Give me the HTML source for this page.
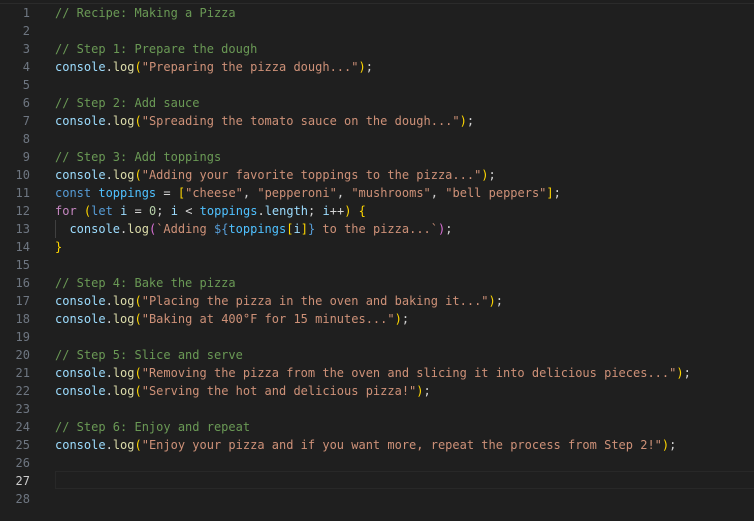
<!DOCTYPE html>
<html><head><meta charset="utf-8"><style>
html,body{margin:0;padding:0;background:#1f1f1f;width:754px;height:521px;overflow:hidden}
.top{position:absolute;left:0;top:0;width:754px;height:3px;border-bottom:1px solid #2b2b2b}
.ed{position:absolute;left:0;top:4px;font-family:"DejaVu Sans Mono","Liberation Mono",monospace;font-size:12px;line-height:18px}
.l{height:18px;position:relative;white-space:pre}
.n{display:inline-block;width:30px;text-align:right;color:#6e7681;margin-right:25px}
.a{color:#cccccc}
.cur{position:absolute;left:55px;top:-1px;width:699px;height:16px;border:1px solid #282828;border-right:none}
.c{color:#6a9955}.v{color:#9cdcfe}.f{color:#dcdcaa}.s{color:#ce9178}.k{color:#569cd6}.x{color:#c586c0}.num{color:#b5cea8}.cv{color:#4fc1ff}.p{color:#d4d4d4}
.g{color:#ffd700}.m{color:#da70d6}.b{color:#179fff}
.guide{position:absolute;left:55px;top:0;width:1px;height:18px;background:#404040}
</style></head><body>
<div class="top"></div>
<div class="ed">
<div class="l"><span class="n">1</span><span class="c">// Recipe: Making a Pizza</span></div>
<div class="l"><span class="n">2</span></div>
<div class="l"><span class="n">3</span><span class="c">// Step 1: Prepare the dough</span></div>
<div class="l"><span class="n">4</span><span class="v">console</span><span class="p">.</span><span class="f">log</span><span class="g">(</span><span class="s">"Preparing the pizza dough..."</span><span class="g">)</span><span class="p">;</span></div>
<div class="l"><span class="n">5</span></div>
<div class="l"><span class="n">6</span><span class="c">// Step 2: Add sauce</span></div>
<div class="l"><span class="n">7</span><span class="v">console</span><span class="p">.</span><span class="f">log</span><span class="g">(</span><span class="s">"Spreading the tomato sauce on the dough..."</span><span class="g">)</span><span class="p">;</span></div>
<div class="l"><span class="n">8</span></div>
<div class="l"><span class="n">9</span><span class="c">// Step 3: Add toppings</span></div>
<div class="l"><span class="n">10</span><span class="v">console</span><span class="p">.</span><span class="f">log</span><span class="g">(</span><span class="s">"Adding your favorite toppings to the pizza..."</span><span class="g">)</span><span class="p">;</span></div>
<div class="l"><span class="n">11</span><span class="k">const</span> <span class="cv">toppings</span> <span class="p">=</span> <span class="g">[</span><span class="s">"cheese"</span><span class="p">,</span> <span class="s">"pepperoni"</span><span class="p">,</span> <span class="s">"mushrooms"</span><span class="p">,</span> <span class="s">"bell peppers"</span><span class="g">]</span><span class="p">;</span></div>
<div class="l"><span class="n">12</span><span class="x">for</span> <span class="g">(</span><span class="k">let</span> <span class="v">i</span> <span class="p">=</span> <span class="num">0</span><span class="p">;</span> <span class="v">i</span> <span class="p">&lt;</span> <span class="cv">toppings</span><span class="p">.</span><span class="v">length</span><span class="p">;</span> <span class="v">i</span><span class="p">++</span><span class="g">)</span> <span class="g">{</span></div>
<div class="l"><span class="guide"></span><span class="n">13</span>  <span class="v">console</span><span class="p">.</span><span class="f">log</span><span class="m">(</span><span class="s">`Adding </span><span class="k">${</span><span class="cv">toppings</span><span class="g">[</span><span class="v">i</span><span class="g">]</span><span class="k">}</span><span class="s"> to the pizza...`</span><span class="m">)</span><span class="p">;</span></div>
<div class="l"><span class="n">14</span><span class="g">}</span></div>
<div class="l"><span class="n">15</span></div>
<div class="l"><span class="n">16</span><span class="c">// Step 4: Bake the pizza</span></div>
<div class="l"><span class="n">17</span><span class="v">console</span><span class="p">.</span><span class="f">log</span><span class="g">(</span><span class="s">"Placing the pizza in the oven and baking it..."</span><span class="g">)</span><span class="p">;</span></div>
<div class="l"><span class="n">18</span><span class="v">console</span><span class="p">.</span><span class="f">log</span><span class="g">(</span><span class="s">"Baking at 400°F for 15 minutes..."</span><span class="g">)</span><span class="p">;</span></div>
<div class="l"><span class="n">19</span></div>
<div class="l"><span class="n">20</span><span class="c">// Step 5: Slice and serve</span></div>
<div class="l"><span class="n">21</span><span class="v">console</span><span class="p">.</span><span class="f">log</span><span class="g">(</span><span class="s">"Removing the pizza from the oven and slicing it into delicious pieces..."</span><span class="g">)</span><span class="p">;</span></div>
<div class="l"><span class="n">22</span><span class="v">console</span><span class="p">.</span><span class="f">log</span><span class="g">(</span><span class="s">"Serving the hot and delicious pizza!"</span><span class="g">)</span><span class="p">;</span></div>
<div class="l"><span class="n">23</span></div>
<div class="l"><span class="n">24</span><span class="c">// Step 6: Enjoy and repeat</span></div>
<div class="l"><span class="n">25</span><span class="v">console</span><span class="p">.</span><span class="f">log</span><span class="g">(</span><span class="s">"Enjoy your pizza and if you want more, repeat the process from Step 2!"</span><span class="g">)</span><span class="p">;</span></div>
<div class="l"><span class="n">26</span></div>
<div class="l"><span class="cur"></span><span class="n a">27</span></div>
<div class="l"><span class="n">28</span></div>
</div>
</body></html>
